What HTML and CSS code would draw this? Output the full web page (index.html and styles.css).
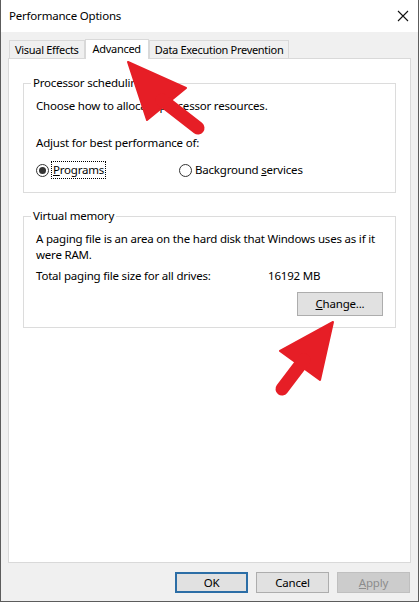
FILE: index.html
```html
<!DOCTYPE html>
<html lang="en">
<head>
    <meta charset="UTF-8">
    <title>Performance Options</title>
    <link rel="stylesheet" href="styles.css">
</head>
<body>
    <div class="window">
        <div class="titlebar">
            <span class="title">Performance Options</span>
            <svg class="close" width="12" height="12" viewBox="0 0 12 12">
                <path d="M1 1 L11 11 M11 1 L1 11" stroke="#111" stroke-width="1.1" fill="none"/>
            </svg>
        </div>
        <div class="content">
            <div class="tabs">
                <div class="tab">Visual Effects</div>
                <div class="tab active">Advanced</div>
                <div class="tab">Data Execution Prevention</div>
            </div>
            <div class="panel">
                <fieldset class="group sched">
                    <legend>Processor scheduling</legend>
                    <p>Choose how to allocate processor resources.</p>
                    <p class="adjust">Adjust for best performance of:</p>
                    <div class="radios">
                        <label class="radio checked"><span class="circle"></span><span class="focus"><u>P</u>rograms</span></label>
                        <label class="radio"><span class="circle"></span><span>Background <u>s</u>ervices</span></label>
                    </div>
                </fieldset>
                <fieldset class="group vm">
                    <legend>Virtual memory</legend>
                    <p>A paging file is an area on the hard disk that Windows uses as if it were RAM.</p>
                    <div class="total">
                        <span>Total paging file size for all drives:</span>
                        <span>16192 MB</span>
                    </div>
                    <div class="change-row">
                        <button class="btn change"><u>C</u>hange...</button>
                    </div>
                </fieldset>
            </div>
            <div class="footer">
                <button class="btn default">OK</button>
                <button class="btn">Cancel</button>
                <button class="btn disabled"><u>A</u>pply</button>
            </div>
        </div>
        <!-- callout arrows drawn over the dialog -->
        <svg class="arrows" width="419" height="602" viewBox="0 0 419 602">
            <g fill="#e61e26" stroke="#e61e26" stroke-linejoin="round">
                <polygon points="128,62 186,88 147,120" stroke-width="2"/>
                <line x1="162" y1="100" x2="198" y2="128" stroke-width="13" stroke-linecap="round"/>
                <polygon points="333,322 280,351 320,380" stroke-width="2"/>
                <line x1="304" y1="360" x2="282" y2="389" stroke-width="13" stroke-linecap="round"/>
            </g>
        </svg>
    </div>
</body>
</html>
```

FILE: styles.css
```css
body {
    margin: 0;
    background: #ffffff;
    font-family: "Noto Sans", sans-serif;
    font-size: 11.5px;
    letter-spacing: -0.2px;
    line-height: 16px;
    color: #000;
}
.window {
    position: relative;
    width: 419px;
    height: 602px;
    box-sizing: border-box;
    border: 1px solid #5c5c5c;
    border-top: none;
    background: #f0f0f0;
    display: flex;
    flex-direction: column;
}
.titlebar {
    height: 32px;
    background: #ffffff;
    display: flex;
    align-items: center;
    justify-content: space-between;
    padding: 0 9px 0 8px;
    flex-shrink: 0;
}
.content {
    padding: 7px 7px 0 7px;
    flex: 1;
    display: flex;
    flex-direction: column;
}
.tabs {
    display: flex;
    align-items: flex-end;
    padding-left: 1px;
    height: 19px;
}
.tab {
    height: 17px;
    line-height: 18px;
    padding: 0 5px;
    font-size: 11px;
    letter-spacing: -0.3px;
    border: 1px solid #d9d9d9;
    border-bottom: none;
    background: #f0f0f0;
    white-space: nowrap;
}
.tab + .tab {
    border-left: none;
}
.tab.active {
    height: 19px;
    line-height: 17px;
    background: #ffffff;
    margin-bottom: -1px;
    padding: 0 7px;
    border-left: 1px solid #d9d9d9;
    position: relative;
    z-index: 1;
}
.tab.active + .tab {
    border-left: 1px solid #d9d9d9;
}
.panel {
    height: 505px;
    box-sizing: border-box;
    background: #ffffff;
    border: 1px solid #d9d9d9;
    padding: 16px 14px 0 14px;
}
.group {
    margin: 0;
    border: 1px solid #dcdcdc;
    padding: 6px 12px 14px 12px;
    min-width: 0;
}
.group legend {
    padding: 0 2px;
    margin-left: -5px;
    line-height: 16px;
}
.group p {
    margin: 0;
}
.sched p:first-of-type {
    margin-top: 1px;
}
.adjust {
    margin-top: 21px !important;
}
.radios {
    display: grid;
    grid-template-columns: 143px auto;
    margin-top: 11px;
}
.radio {
    display: flex;
    align-items: center;
    height: 16px;
}
.circle {
    width: 11px;
    height: 11px;
    border: 1px solid #333;
    border-radius: 50%;
    background: #fff;
    margin-right: 3px;
    position: relative;
}
.checked .circle::after {
    content: "";
    position: absolute;
    left: 2px;
    top: 2px;
    width: 7px;
    height: 7px;
    border-radius: 50%;
    background: #333;
}
.focus {
    outline: 1px dotted #000;
    padding: 0 1px;
}
.vm {
    margin-top: 15px;
    padding-top: 7px;
    padding-bottom: 11px;
}
.total {
    display: grid;
    grid-template-columns: 232px auto;
    margin-top: 5px;
}
.change-row {
    display: flex;
    justify-content: flex-end;
    margin-top: 8px;
}
.btn {
    font-family: inherit;
    font-size: 11.5px;
    letter-spacing: -0.2px;
    line-height: 16px;
    color: #000;
    background: #e1e1e1;
    border: 1px solid #adadad;
    padding: 0;
    margin: 0;
}
.change {
    width: 86px;
    height: 24px;
}
.footer {
    display: flex;
    justify-content: flex-end;
    gap: 8px;
    padding-top: 9px;
    padding-right: 1px;
}
.footer .btn {
    width: 73px;
    height: 21px;
}
.btn.default {
    border: 2px solid #2c6ea6;
}
.btn.disabled {
    background: #cccccc;
    border-color: #bfbfbf;
    color: #8c8c8c;
}
.arrows {
    position: absolute;
    left: -1px;
    top: 0;
    pointer-events: none;
}
```
